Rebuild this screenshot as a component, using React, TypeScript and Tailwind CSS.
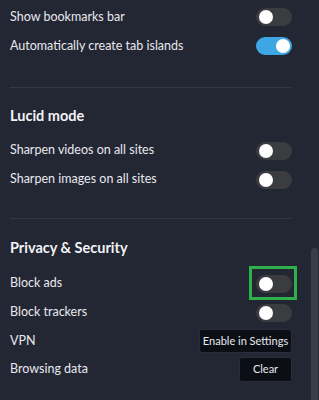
import React from "react";

function Toggle({ on = false }: { on?: boolean }) {
  return (
    <div
      className={`relative h-[18px] w-[36px] rounded-full ${on ? "bg-[#3fa6e4]" : "bg-[#3b3c40]"}`}
    >
      <div
        className={`absolute top-[2px] h-[14px] w-[14px] rounded-full bg-white ${on ? "left-[20px]" : "left-[3px]"}`}
      />
    </div>
  );
}

function Row({
  label,
  h = "h-[29px]",
  children,
}: {
  label: string;
  h?: string;
  children: React.ReactNode;
}) {
  return (
    <div className={`flex items-center justify-between ${h}`}>
      <span className="text-[12.5px] text-[#e8e9ee]">{label}</span>
      {children}
    </div>
  );
}

export default function App() {
  return (
    <div
      className="relative h-[400px] w-[319px] overflow-hidden bg-[#232633]"
      style={{ fontFamily: "Lato, 'Noto Sans', sans-serif" }}
    >
      <div className="w-[292px] pl-[10px] pt-[2.5px]">
        <Row label="Show bookmarks bar">
          <Toggle />
        </Row>
        <Row label="Automatically create tab islands">
          <Toggle on />
        </Row>
        <div className="mt-[26px] h-px bg-[#343747]" />
        <div className="pt-[17px] text-[14.5px] font-bold text-[#f1f2f5]">Lucid mode</div>
        <div className="mt-[10px]">
          <Row label="Sharpen videos on all sites">
            <Toggle />
          </Row>
          <Row label="Sharpen images on all sites">
            <Toggle />
          </Row>
        </div>
        <div className="mt-[24px] h-px bg-[#343747]" />
        <div className="pt-[18px] text-[14.5px] font-bold text-[#f1f2f5]">Privacy &amp; Security</div>
        <div className="mt-[10px]">
          <Row label="Block ads">
            <div className="relative">
              <Toggle />
              <div className="absolute -left-[7px] -top-[9px] h-[34px] w-[48px] border-[3px] border-[#2fb04b]" />
            </div>
          </Row>
          <Row label="Block trackers">
            <Toggle />
          </Row>
          <Row label="VPN" h="h-[28px]">
            <button className="h-[24px] w-[93px] rounded-[3px] border border-[#2a2d38] bg-[#0c0e16] text-[11px] text-[#e8e9ee]">
              Enable in Settings
            </button>
          </Row>
          <Row label="Browsing data">
            <button className="h-[25px] w-[53px] rounded-[3px] border border-[#2a2d38] bg-[#0c0e16] text-[11px] text-[#e8e9ee]">
              Clear
            </button>
          </Row>
        </div>
      </div>
      <div className="absolute left-[311px] top-[248px] h-[160px] w-[7px] rounded-t-full bg-[#3a3d48]" />
    </div>
  );
}
